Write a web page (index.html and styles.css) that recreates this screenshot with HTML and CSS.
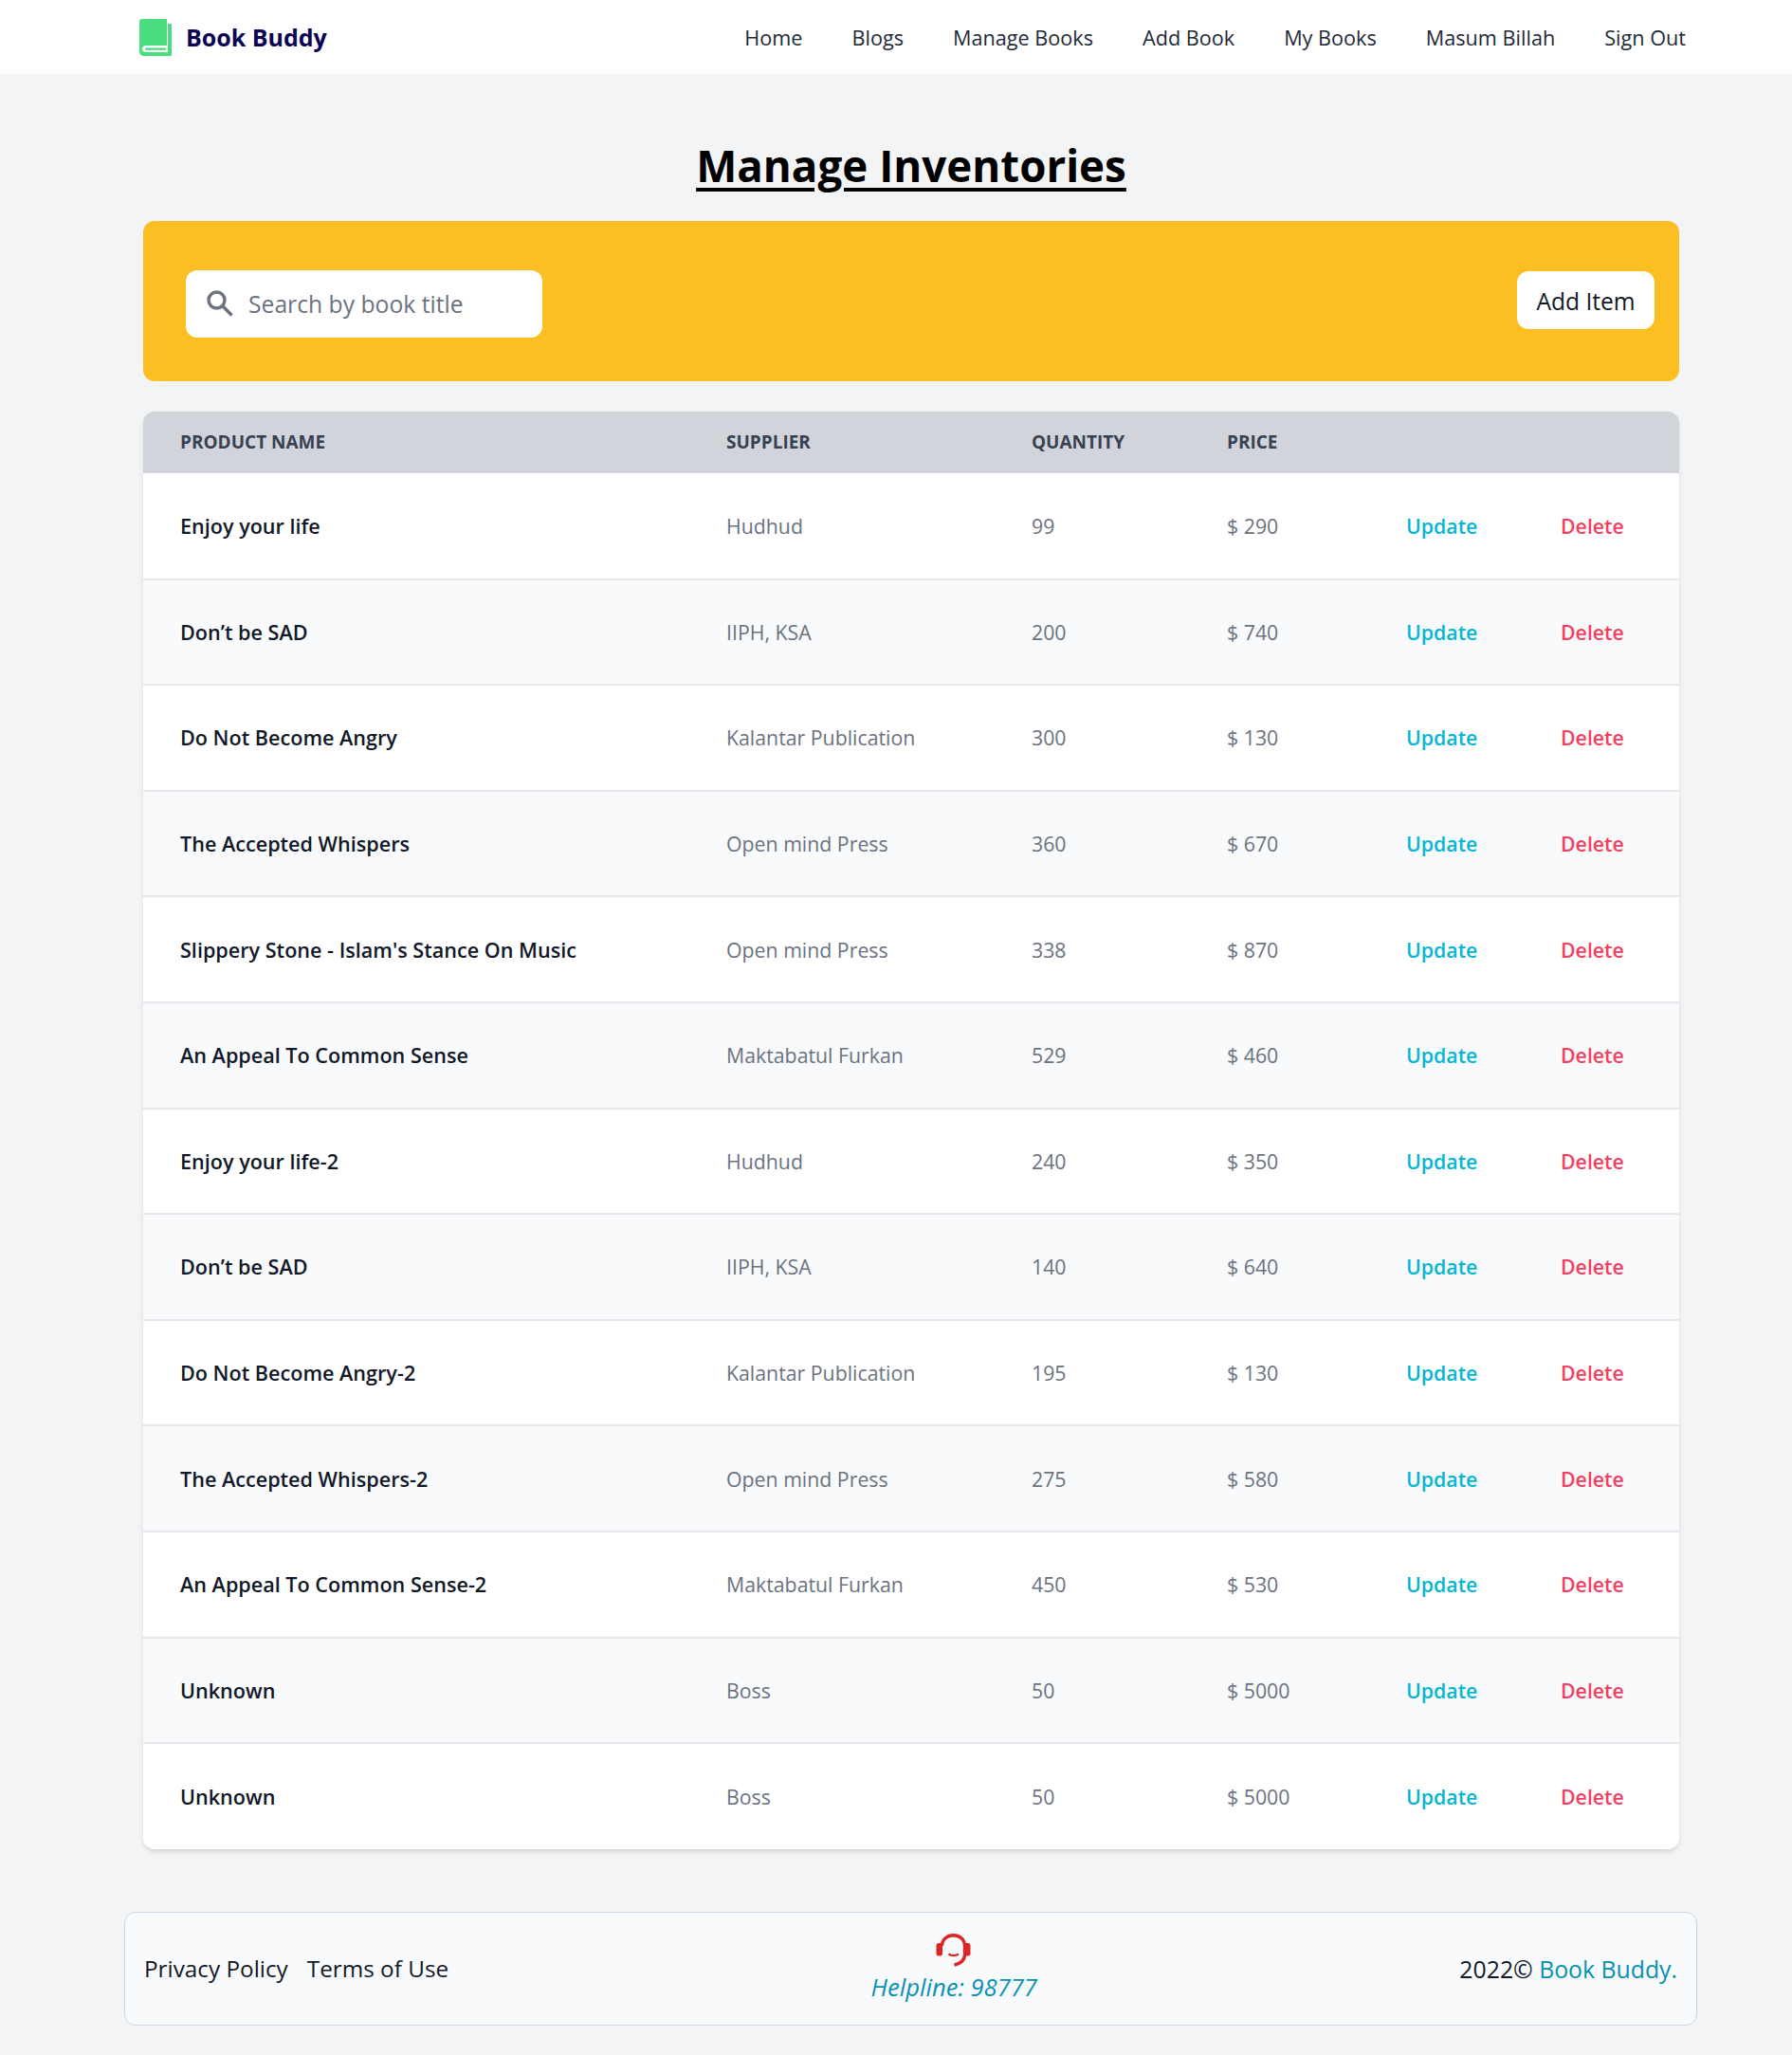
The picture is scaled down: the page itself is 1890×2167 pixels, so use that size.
FILE: index.html
```html
<!DOCTYPE html>
<html lang="en">
<head>
    <meta charset="UTF-8">
    <meta name="viewport" content="width=device-width, initial-scale=1.0">
    <title>Book Buddy - Manage Inventories</title>
    <link rel="stylesheet" href="styles.css">
</head>
<body>
    <nav class="navbar">
        <a class="brand" href="#">
            <svg class="brand-icon" viewBox="0 0 34 39" width="34" height="39">
                <path fill="#4ade80" d="M3 0H29V28H7C4.500 28 3 29.500 3 31.500C3 33.500 4.500 35 7 35H30V5H34V39H5C2 39 0 37 0 34V3C0 1.200 1.200 0 3 0Z"/>
                <path fill="#4ade80" d="M7 30.500H28V32.700H7C5.600 32.700 5.600 30.500 7 30.500Z"/>
            </svg>
            <span>Book Buddy</span>
        </a>
        <ul class="nav-links">
            <li><a href="#">Home</a></li>
            <li><a href="#">Blogs</a></li>
            <li><a href="#">Manage Books</a></li>
            <li><a href="#">Add Book</a></li>
            <li><a href="#">My Books</a></li>
            <li><a href="#">Masum Billah</a></li>
            <li><a href="#">Sign Out</a></li>
        </ul>
    </nav>

    <main class="content">
        <h1 class="page-title">Manage Inventories</h1>

        <section class="toolbar">
            <label class="search">
                <svg class="search-icon" viewBox="0 0 28 28" width="28" height="28">
                    <circle cx="10.500" cy="10.500" r="8.500" fill="none" stroke="#6b7280" stroke-width="3.400"/>
                    <path d="M16.600 16.600L26.500 26.500" fill="none" stroke="#6b7280" stroke-width="3.600"/>
                </svg>
                <input type="text" placeholder="Search by book title">
            </label>
            <button class="add-btn">Add Item</button>
        </section>

        <div class="table-wrap">
            <table class="inventory">
                <colgroup>
                    <col class="col-name">
                    <col class="col-supplier">
                    <col class="col-qty">
                    <col class="col-price">
                    <col class="col-update">
                    <col class="col-delete">
                </colgroup>
                <thead>
                    <tr>
                        <th>Product name</th>
                        <th>Supplier</th>
                        <th>Quantity</th>
                        <th>Price</th>
                        <th></th>
                        <th></th>
                    </tr>
                </thead>
                <tbody>
                    <tr><td class="name">Enjoy your life</td><td>Hudhud</td><td>99</td><td>$ 290</td><td><a class="update" href="#">Update</a></td><td><a class="delete" href="#">Delete</a></td></tr>
                    <tr><td class="name">Don’t be SAD</td><td>IIPH, KSA</td><td>200</td><td>$ 740</td><td><a class="update" href="#">Update</a></td><td><a class="delete" href="#">Delete</a></td></tr>
                    <tr><td class="name">Do Not Become Angry</td><td>Kalantar Publication</td><td>300</td><td>$ 130</td><td><a class="update" href="#">Update</a></td><td><a class="delete" href="#">Delete</a></td></tr>
                    <tr><td class="name">The Accepted Whispers</td><td>Open mind Press</td><td>360</td><td>$ 670</td><td><a class="update" href="#">Update</a></td><td><a class="delete" href="#">Delete</a></td></tr>
                    <tr><td class="name">Slippery Stone - Islam's Stance On Music</td><td>Open mind Press</td><td>338</td><td>$ 870</td><td><a class="update" href="#">Update</a></td><td><a class="delete" href="#">Delete</a></td></tr>
                    <tr><td class="name">An Appeal To Common Sense</td><td>Maktabatul Furkan</td><td>529</td><td>$ 460</td><td><a class="update" href="#">Update</a></td><td><a class="delete" href="#">Delete</a></td></tr>
                    <tr><td class="name">Enjoy your life-2</td><td>Hudhud</td><td>240</td><td>$ 350</td><td><a class="update" href="#">Update</a></td><td><a class="delete" href="#">Delete</a></td></tr>
                    <tr><td class="name">Don’t be SAD</td><td>IIPH, KSA</td><td>140</td><td>$ 640</td><td><a class="update" href="#">Update</a></td><td><a class="delete" href="#">Delete</a></td></tr>
                    <tr><td class="name">Do Not Become Angry-2</td><td>Kalantar Publication</td><td>195</td><td>$ 130</td><td><a class="update" href="#">Update</a></td><td><a class="delete" href="#">Delete</a></td></tr>
                    <tr><td class="name">The Accepted Whispers-2</td><td>Open mind Press</td><td>275</td><td>$ 580</td><td><a class="update" href="#">Update</a></td><td><a class="delete" href="#">Delete</a></td></tr>
                    <tr><td class="name">An Appeal To Common Sense-2</td><td>Maktabatul Furkan</td><td>450</td><td>$ 530</td><td><a class="update" href="#">Update</a></td><td><a class="delete" href="#">Delete</a></td></tr>
                    <tr><td class="name">Unknown</td><td>Boss</td><td>50</td><td>$ 5000</td><td><a class="update" href="#">Update</a></td><td><a class="delete" href="#">Delete</a></td></tr>
                    <tr><td class="name">Unknown</td><td>Boss</td><td>50</td><td>$ 5000</td><td><a class="update" href="#">Update</a></td><td><a class="delete" href="#">Delete</a></td></tr>
                </tbody>
            </table>
        </div>
    </main>

    <footer class="footer">
        <div class="footer-links">
            <a href="#">Privacy Policy</a>
            <a href="#">Terms of Use</a>
        </div>
        <div class="helpline">
            <svg viewBox="0 0 38 38" width="38" height="38">
                <path d="M6.500 15C6.500 8 12 3.700 18.500 3.700C25 3.700 30.500 8 30.500 15V24C30.500 30 26 33.500 19.500 35" fill="none" stroke="#dc2626" stroke-width="3.400"/>
                <rect x="0.500" y="12" width="6.500" height="13.500" rx="2.500" fill="#dc2626"/>
                <rect x="30" y="12" width="6.500" height="13.500" rx="2.500" fill="#dc2626"/>
                <path d="M13.500 23.500C16.500 25.500 21 25.500 24 23.500" fill="none" stroke="#dc2626" stroke-width="2.600"/>
            </svg>
            <em>Helpline: 98777</em>
        </div>
        <p class="copyright">2022© <a href="#">Book Buddy.</a></p>
    </footer>
</body>
</html>
```

FILE: styles.css
```css
* {
    box-sizing: border-box;
}

body {
    margin: 0;
    background-color: #f3f4f6;
    color: #111827;
    font-family: "Open Sans", "Noto Sans", Arial, sans-serif;
}

a {
    color: inherit;
    text-decoration: none;
}

.navbar {
    display: flex;
    justify-content: space-between;
    align-items: center;
    height: 78px;
    padding: 0 112px 0 147px;
    background-color: #fff;
}

.brand {
    display: flex;
    align-items: center;
    gap: 15px;
    color: #0b0354;
    font-size: 25px;
    font-weight: 700;
}

.nav-links {
    display: flex;
    gap: 52px;
    margin: 0;
    padding: 0;
    list-style: none;
    color: #1f2937;
    font-size: 21.650px;
}

.content {
    width: 1620px;
    margin-left: 151px;
}

.page-title {
    margin: 0;
    padding: 67px 0 29px;
    color: #000;
    font-size: 45.700px;
    font-weight: 700;
    line-height: 59px;
    text-align: center;
    text-decoration: underline;
    text-decoration-thickness: 4px;
    text-underline-offset: 6px;
}

.toolbar {
    display: flex;
    justify-content: space-between;
    align-items: center;
    height: 169px;
    padding: 0 26px 0 45px;
    border-radius: 12px;
    background-color: #fbbf24;
}

.search {
    display: flex;
    align-items: center;
    gap: 14px;
    width: 376px;
    height: 71px;
    margin-top: 5px;
    padding: 0 22px;
    border-radius: 12px;
    background-color: #fff;
}

.search input {
    flex: 1;
    min-width: 0;
    border: 0;
    outline: 0;
    background: none;
    font: inherit;
    font-size: 24.700px;
}

.search input::placeholder {
    color: #6b7280;
    opacity: 1;
}

.add-btn {
    width: 145px;
    height: 61px;
    margin-top: -2px;
    padding: 2px 0 0;
    border: 0;
    border-radius: 12px;
    background-color: #fff;
    color: #111827;
    font: inherit;
    font-size: 24.600px;
}

.table-wrap {
    margin-top: 32px;
    overflow: hidden;
    border-radius: 12px;
    box-shadow: 0 4px 6px -1px rgba(0, 0, 0, 0.1), 0 2px 4px -2px rgba(0, 0, 0, 0.1);
}

.inventory {
    width: 100%;
    table-layout: fixed;
    border-collapse: collapse;
    font-size: 21.300px;
}

.col-name { width: 576px; }
.col-supplier { width: 322px; }
.col-qty { width: 206px; }
.col-price { width: 189px; }
.col-update { width: 163px; }
.col-delete { width: 164px; }

.inventory th {
    height: 65px;
    padding: 0 0 2px 39px;
    background-color: #d1d5db;
    color: #374151;
    font-size: 19px;
    font-weight: 700;
    text-align: left;
    text-transform: uppercase;
}

.inventory td {
    height: 111.600px;
    padding: 0 0 0 39px;
    border-bottom: 2px solid #e5e7eb;
    background-color: #fff;
    color: #6b7280;
}

.inventory tbody tr:nth-child(even) td {
    background-color: #f9fafb;
}

.inventory tbody tr:last-child td {
    border-bottom: 0;
}

.inventory td.name {
    color: #111827;
    font-size: 21.600px;
    font-weight: 600;
}

.update,
.delete {
    font-weight: 600;
}

.update {
    color: #06b6d4;
}

.delete {
    color: #f43f5e;
}

.footer {
    display: flex;
    justify-content: space-between;
    align-items: center;
    width: 1659px;
    height: 120px;
    margin: 66px 0 30px 131px;
    padding: 0 20px;
    border: 1px solid #cbd5e1;
    border-radius: 12px;
    background-color: #f8fafc;
    font-size: 24.300px;
}

.footer-links {
    display: flex;
    gap: 20px;
}

.helpline {
    display: flex;
    flex-direction: column;
    align-items: center;
    padding-bottom: 2px;
    color: #0891b2;
    font-size: 25.600px;
}

.helpline svg {
    margin-bottom: 3px;
}

.copyright {
    margin: 0;
    font-size: 24.800px;
    text-align: right;
}

.copyright a {
    color: #0891b2;
}
```
